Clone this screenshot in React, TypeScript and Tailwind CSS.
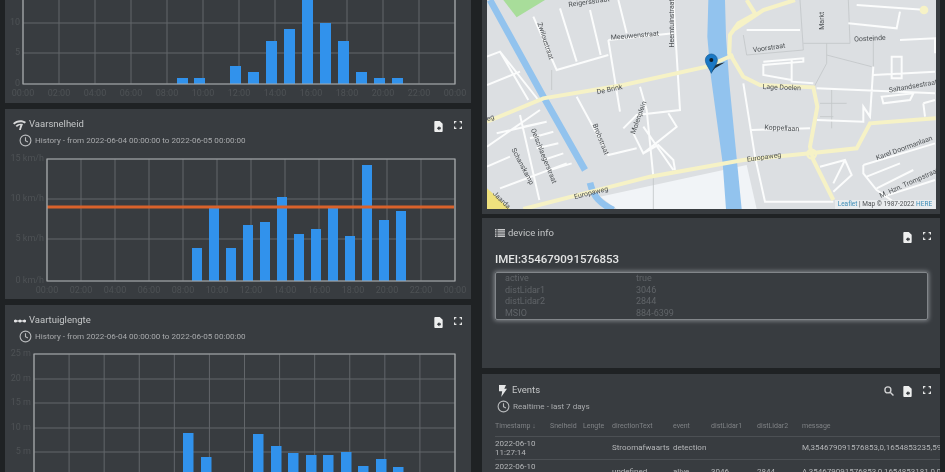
import React from 'react';

const FONT = 'font-["Roboto",sans-serif]';
const HOURS = ['00:00', '02:00', '04:00', '06:00', '08:00', '10:00', '12:00', '14:00', '16:00', '18:00', '20:00', '22:00', '00:00'];

type ChartProps = {
  width: number;
  height: number;
  left: number;
  right: number;
  top: number;
  bottom: number;
  yLabels: { y: number; label: string }[];
  bars: { x: number; top: number; w: number }[];
  xLabels?: boolean;
  limit?: number;
};

// all numbers are local pixels of the svg
const Chart = ({ width, height, left, right, top, bottom, yLabels, bars, xLabels = true, limit }: ChartProps) => {
  const step = (right - left) / 12;
  return (
    <svg width={width} height={height} viewBox={`0 0 ${width} ${height}`} className="block">
      {HOURS.map((_, i) => (
        <line key={i} x1={left + step * i} x2={left + step * i} y1={top} y2={bottom} stroke="#62666a" strokeWidth="1" />
      ))}
      {yLabels.map((t) => (
        <g key={t.label}>
          <line x1={left} x2={right} y1={t.y} y2={t.y} stroke="#62666a" strokeWidth="1" />
          <text x={left - 3} y={t.y + 2} textAnchor="end" fontSize="9" fill="#4e5255">{t.label}</text>
        </g>
      ))}
      {bars.map((b) => (
        <rect key={b.x} x={b.x} y={b.top} width={b.w} height={bottom - b.top} fill="#3192ec" />
      ))}
      {limit !== undefined && <line x1={left} x2={right - 1} y1={limit} y2={limit} stroke="#d9622b" strokeWidth="3" />}
      <path d={`M${left} ${top}H${right}V${bottom}H${left}Z`} fill="none" stroke="#a6a9ab" strokeWidth="1.2" />
      {xLabels && HOURS.map((h, i) => (
        <text key={i} x={left + step * i} y={bottom + 12} textAnchor="middle" fontSize="9" fill="#4e5255">{h}</text>
      ))}
    </svg>
  );
};

const ExportIcon = () => (
  <svg width="9" height="11" viewBox="0 0 11 12" preserveAspectRatio="none" fill="#eeefef">
    <path d="M1.400 0H7l3.600 3v8a1 1 0 0 1-1 1H1.400a1 1 0 0 1-1-1V1a1 1 0 0 1 1-1Z" />
    <path d="M3.500 8 6.500 5.400v1.400h1.800v2.200H6.500v1.400Z" fill="#383c40" />
  </svg>
);

const FullscreenIcon = () => (
  <svg width="8" height="8" viewBox="0 0 10 10" fill="none" stroke="#e4e5e5" strokeWidth="1.500">
    <path d="M.7 3V.7H3M7 .7h2.300V3M9.300 7v2.300H7M3 9.300H.7V7" />
  </svg>
);

const SearchIcon = () => (
  <svg width="10" height="10" viewBox="0 0 11 11" fill="none" stroke="#d0d1d2" strokeWidth="1.500">
    <circle cx="4.300" cy="4.300" r="3.300" />
    <path d="m6.800 6.800 3.600 3.600" />
  </svg>
);

const ClockIcon = () => (
  <svg width="13" height="13" viewBox="0 0 13 13" fill="none" stroke="#b9bbbd" strokeWidth="1.100">
    <circle cx="6.500" cy="6.500" r="5.400" />
    <path d="M6.500 3.300v3.400l2.400 1.400" />
  </svg>
);

const SpeedIcon = () => (
  <svg width="13" height="10" viewBox="0 0 13 10" fill="#d8d9da">
    <path d="M0 3.200C3.600-.6 9.400-.6 13 2L11.700 3.400C9 1.600 4.600 1.600 1.400 4.600Z" />
    <path d="M2.600 5.800c2-2 4.700-2.600 7-1.700L8 5.400C6.600 5.100 5.200 5.500 4 6.900Z" />
    <path d="M6 10 7.500 4.700 10 3.800 8 9.200a1.100 1.100 0 0 1-2 .8Z" />
  </svg>
);

const ScaleIcon = () => (
  <svg width="12" height="6" viewBox="0 0 12 6" fill="#e4e5e6">
    <circle cx="1.500" cy="3" r="1.500" />
    <circle cx="6" cy="3" r="1.500" />
    <circle cx="10.500" cy="3" r="1.500" />
    <rect y="2.400" width="12" height="1.200" />
  </svg>
);

const ListIcon = () => (
  <svg width="10" height="8" viewBox="0 0 10 8" fill="#c9cacb">
    <path d="M0 0h1.500v1.400H0ZM2.500 0H10v1.400H2.500ZM0 2.200h1.500v1.400H0ZM2.500 2.200H10v1.400H2.500ZM0 4.400h1.500v1.400H0ZM2.500 4.400H10v1.400H2.500ZM0 6.600h1.500V8H0ZM2.500 6.600H10V8H2.500Z" />
  </svg>
);

const BoltIcon = () => (
  <svg width="8" height="12" viewBox="0 0 8 12" fill="#e4e5e6">
    <path d="M0 0h7L5.300 3.800H8L2.200 12l1-5.800H0Z" />
  </svg>
);

const CardHeader = ({ icon, title, sub }: { icon: React.ReactNode; title: string; sub: string }) => (
  <div className="flex justify-between pl-2 pr-[9px] pt-[9px]">
    <div>
      <div className="flex h-[13px] items-center gap-[3px] text-[9.5px] text-[#c4c6c7]">
        <span className="flex w-[13px] justify-center">{icon}</span>
        {title}
      </div>
      <div className="ml-[6px] mt-[3px] flex h-[13px] items-center gap-[3px] text-[8.1px] text-[#a8aaac]">
        <ClockIcon />
        {sub}
      </div>
    </div>
    <div className="flex items-start gap-[11px] pt-[3px]">
      <ExportIcon />
      <FullscreenIcon />
    </div>
  </div>
);

const street = 'M160 50 230 210 385 165M240 25 290 185M330 30 362 165M385 120 420 335M385 120 580 100M415 0 440 100M580 0 600 330 470 345 430 385M21 170 60 155 175 300M21 255 120 215M60 155 145 300M120 345 178 600M21 440 180 330M50 400 200 365M130 380 200 365M150 415 220 395M170 445 235 430M190 480 250 460M210 510 275 490M21 500 90 470M60 565 260 490M290 290 385 465 470 445M480 260 500 330 520 530M460 400 490 460 590 380 565 340M490 380 580 510M490 460 535 435 580 480 585 510M800 90 960 90M790 250 825 470 855 605 1060 605M815 390 990 385M1010 265 1365 280M850 185 970 175 970 185 850 195 850 225 935 240M935 180 935 245 1000 250M1180 200 1170 350 1150 320 1150 365 1010 360M1180 225 1365 215M1235 170 1235 235 1265 235 1265 170ZM1205 290 1300 280 1290 300 1210 310ZM1330 310 1365 300M1330 310 1335 350M1130 15 1340 30M1105 70 1250 85 1260 35M1260 120 1365 115 1365 160M1020 500 1095 480 1115 525 1060 575M1095 480 1060 550M1150 495 1365 430M1160 530 1260 490M1190 565 1300 510M1210 590 1365 540M1150 495 1150 520 1190 570 1240 605';
const faint = 'M790 105 800 165 970 150 960 0M970 130 1110 130 1105 0M1040 130 1040 190 1000 265M1040 165 1175 200M1055 270 1055 385M1020 350 1060 350M1020 310 1100 310M1180 120 1180 200M215 210 215 270M520 530 520 627';

const MapView = () => (
  <svg width="449" height="209" viewBox="21 0 1347 627" className="block" fontFamily="Roboto, sans-serif">
    <rect x="21" y="0" width="1347" height="627" fill="#dcdfe2" />
    <path d="M70 0H195L110 52Z" fill="#a8dd9a" />
    <path d="M360 590 730 510 800 495 830 627H410Z" fill="#f1f4f7" />
    <path d="M685 0H735L738 110 748 250 785 627H738L728 490 692 225 682 110Z" fill="#92c3ee" />
    <path d="M30 0 190 290 315 510" fill="none" stroke="#92c3ee" strokeWidth="20" />
    <path d="M330 548C340 590 360 610 400 630" fill="none" stroke="#92c3ee" strokeWidth="20" />
    <path d={faint} fill="none" stroke="#c3c6c9" strokeWidth="2.500" />
    <path d={street} fill="none" stroke="#fbfcfc" strokeWidth="6" />
    <path d="M21 365 190 295 430 255 680 200 760 165M830 40 775 70 750 105 748 160 790 230 840 255 1000 262 1012 320 990 440 1000 480 1060 600M130 627 510 530 790 480 990 460 1130 445 1170 370 1367 355M760 90 850 30 945 0M800 0 825 40" fill="none" stroke="#f6f2c6" strokeWidth="12" />
    <path d="M21 565 90 627H21Z" fill="#efe17e" />
    <circle cx="995" cy="462" r="13" fill="none" stroke="#f6f2c6" strokeWidth="7" />
    <circle cx="1332" cy="30" r="13" fill="#f6f2c6" />
    <g fontSize="21" fill="#4c5053" textAnchor="middle">
      <text x="328" y="12" transform="rotate(-8 328 12)">Reigersstraat</text>
      <text x="190" y="125" transform="rotate(72 190 125)">Zwiloustraat</text>
      <text x="465" y="113" transform="rotate(-5 465 113)">Meeuwenstraat</text>
      <text x="582" y="70" transform="rotate(-90 582 70)">Heemtuinstraat</text>
      <text x="868" y="150" transform="rotate(-8 868 150)">Voorstraat</text>
      <text x="1032" y="62" transform="rotate(-90 1032 62)">Markt</text>
      <text x="1170" y="122" transform="rotate(-3 1170 122)">Oosteinde</text>
      <text x="390" y="275" transform="rotate(-12 390 275)">De Brink</text>
      <text x="905" y="269" transform="rotate(2 905 269)">Lage Doelen</text>
      <text x="1300" y="265" transform="rotate(-10 1300 265)">Saltandsestraat</text>
      <text x="905" y="391" transform="rotate(3 905 391)">Koppellaan</text>
      <text x="482" y="355" transform="rotate(-70 482 355)">Molenplein</text>
      <text x="356" y="420" transform="rotate(68 356 420)">Brobstraat</text>
      <text x="185" y="470" transform="rotate(68 185 470)">Oelschlaegerstraat</text>
      <text x="122" y="502" transform="rotate(62 122 502)">Schanskamp</text>
      <text x="853" y="478" transform="rotate(-8 853 478)">Europaweg</text>
      <text x="335" y="585" transform="rotate(-14 335 585)">Europaweg</text>
      <text x="1275" y="450" transform="rotate(-20 1275 450)">Karel Doormanlaan</text>
      <text x="1290" y="555" transform="rotate(-24 1290 555)">M. Hzn. Trompstraat</text>
      <text x="60" y="605" transform="rotate(45 60 605)">Jaarda</text>
      <text x="33" y="360" transform="rotate(-20 33 360)">eg</text>
    </g>
    {/* marker and its shadow */}
    <path d="M694 218 700 196 735 187 705 205Z" fill="#1d2a30" />
    <path d="M694 220C684 198 676 192 676 180A18 18 0 0 1 712 180C712 192 702 198 694 220Z" fill="#1b78c4" stroke="#125a96" strokeWidth="2" />
    <circle cx="694" cy="180" r="6" fill="#0d1b26" />
    <rect x="1065" y="600" width="302" height="27" fill="#e9ecee" />
    <text x="1073" y="619" fontSize="19.500" fill="#4d5154">
      <tspan fill="#3f8fb8">Leaflet</tspan> | Map © 1987-2022 <tspan fill="#3f8fb8">HERE</tspan>
    </text>
  </svg>
);

const deviceRows = [
  ['active', 'true'],
  ['distLidar1', '3046'],
  ['distLidar2', '2844'],
  ['MSIO', '884-6399'],
];

const TopChart = () => (
  <Chart
    width={466}
    height={103}
    left={18}
    right={450}
    top={-10}
    bottom={84}
    yLabels={[{ y: 23, label: '10' }, { y: 53, label: '5' }, { y: 84, label: '0' }]}
    bars={[
      [172, 6], [189, 6], [225, 18], [243, 12], [261, 43], [279, 55], [297, 94], [315, 61], [333, 43], [351, 12], [369, 6], [387, 6],
    ].map(([x, h]) => ({ x, top: 84 - h, w: 11 }))}
  />
);

const SpeedChart = () => (
  <Chart
    width={466}
    height={145}
    left={42}
    right={450}
    top={5}
    bottom={127}
    limit={53}
    yLabels={[{ y: 5, label: '15 km/h' }, { y: 45, label: '10 km/h' }, { y: 85, label: '5 km/h' }, { y: 127, label: '0 km/h' }]}
    bars={[
      [187, 94], [204, 53], [221, 94], [238, 71], [255, 68], [272, 43], [289, 80], [306, 75], [323, 53], [340, 82], [357, 11], [374, 66], [391, 57],
    ].map(([x, top]) => ({ x, top, w: 10 }))}
  />
);

const LengthChart = () => (
  <Chart
    width={466}
    height={123}
    left={29}
    right={450}
    top={5}
    bottom={128}
    xLabels={false}
    yLabels={[{ y: 5, label: '25 m' }, { y: 30, label: '20 m' }, { y: 54, label: '15 m' }, { y: 79, label: '10 m' }, { y: 103, label: '5 m' }]}
    bars={[
      [178, 84], [196, 108], [248, 85], [266, 97], [283, 104], [301, 106], [318, 106], [336, 103], [353, 117], [371, 110], [388, 118],
    ].map(([x, top]) => ({ x, top, w: 10.500 }))}
  />
);

export default function App() {
  return (
    <div className={`${FONT} flex h-[472px] w-[945px] gap-[11px] overflow-hidden bg-[#1f2224] px-[5px] blur-[0.5px]`}>
      {/* left column */}
      <div className="flex w-[466px] flex-col gap-[6px]">
        <section className="h-[103px] shrink-0 bg-[#383c40]">
          <TopChart />
        </section>
        <section className="h-[190px] shrink-0 bg-[#383c40]">
          <CardHeader icon={<SpeedIcon />} title="Vaarsnelheid" sub="History - from 2022-06-04 00:00:00 to 2022-06-05 00:00:00" />
          <div className="mt-[7px]">
            <SpeedChart />
          </div>
        </section>
        <section className="min-h-0 flex-1 bg-[#383c40]">
          <CardHeader icon={<ScaleIcon />} title="Vaartuiglengte" sub="History - from 2022-06-04 00:00:00 to 2022-06-05 00:00:00" />
          <div className="mt-[6px]">
            <LengthChart />
          </div>
        </section>
      </div>

      {/* right column */}
      <div className="flex w-[458px] flex-col">
        <section className="h-[214px] shrink-0 bg-[#383c40] pl-[5px]">
          <MapView />
        </section>
        <section className="mt-[4px] h-[150px] shrink-0 bg-[#383c40] pl-[13px] pr-[9px] pt-[9px]">
          <div className="flex justify-between">
            <div className="flex h-[12px] items-center gap-[3px] text-[9.5px] text-[#c4c6c7]">
              <ListIcon />
              device info
            </div>
            <div className="flex items-start gap-[11px] pt-[5px]">
              <ExportIcon />
              <FullscreenIcon />
            </div>
          </div>
          <div className="mt-[8px] text-[11.5px] font-medium leading-[16px] text-[#e4e5e5]">IMEI:354679091576853</div>
          <div className="mt-[5px] h-[48px] w-[433px] rounded-[2px] border border-[#82868a] px-[9px] text-[9px] leading-[11.700px] text-[#606468] shadow-[0_0_4px_1px_#82868a]">
            {deviceRows.map(([k, v]) => (
              <div key={k} className="flex">
                <span className="w-[131px]">{k}</span>
                <span>{v}</span>
              </div>
            ))}
          </div>
        </section>
        <section className="mt-[6px] min-h-0 flex-1 overflow-hidden bg-[#383c40] pl-[13px] pt-[10px]">
          <div className="flex justify-between pr-[9px]">
            <div>
              <div className="ml-[4px] flex h-[13px] items-center gap-[5px] text-[9.5px] text-[#c4c6c7]">
                <BoltIcon />
                Events
              </div>
              <div className="ml-[2px] mt-[3px] flex h-[13px] items-center gap-[3px] text-[8.1px] text-[#a8aaac]">
                <ClockIcon />
                Realtime - last 7 days
              </div>
            </div>
            <div className="flex items-start gap-[9px] pt-[2px]">
              <SearchIcon />
              <ExportIcon />
              <span className="ml-[2px]"><FullscreenIcon /></span>
            </div>
          </div>
          <div className="mt-[4px] flex h-[20px] items-center border-b border-[#4c5054] text-[7px] text-[#7f8285]">
            <span className="w-[55px] shrink-0">Timestamp ↓</span>
            <span className="w-[33px] shrink-0">Snelheid</span>
            <span className="w-[29px] shrink-0">Lengte</span>
            <span className="w-[61px] shrink-0">directionText</span>
            <span className="w-[38px] shrink-0">event</span>
            <span className="w-[46px] shrink-0">distLidar1</span>
            <span className="w-[45px] shrink-0">distLidar2</span>
            <span>message</span>
          </div>
          <div className="flex h-[23px] items-center border-b border-[#4c5054] text-[8px] text-[#b4b6b8]">
            <span className="w-[117px] shrink-0 leading-[9.500px]">2022-06-10<br />11:27:14</span>
            <span className="w-[61px] shrink-0">Stroomafwaarts</span>
            <span className="w-[129px] shrink-0">detection</span>
            <span className="whitespace-nowrap">M,354679091576853,0,1654853235,594</span>
          </div>
          <div className="flex h-[23px] items-center text-[8px] text-[#b4b6b8]">
            <span className="w-[117px] shrink-0 leading-[9.500px]">2022-06-10<br />11:26:21</span>
            <span className="w-[61px] shrink-0">undefined</span>
            <span className="w-[38px] shrink-0">alive</span>
            <span className="w-[46px] shrink-0">3046</span>
            <span className="w-[45px] shrink-0">2844</span>
            <span className="whitespace-nowrap">A,354679091576853,0,1654853181,0,0</span>
          </div>
        </section>
      </div>
    </div>
  );
}
